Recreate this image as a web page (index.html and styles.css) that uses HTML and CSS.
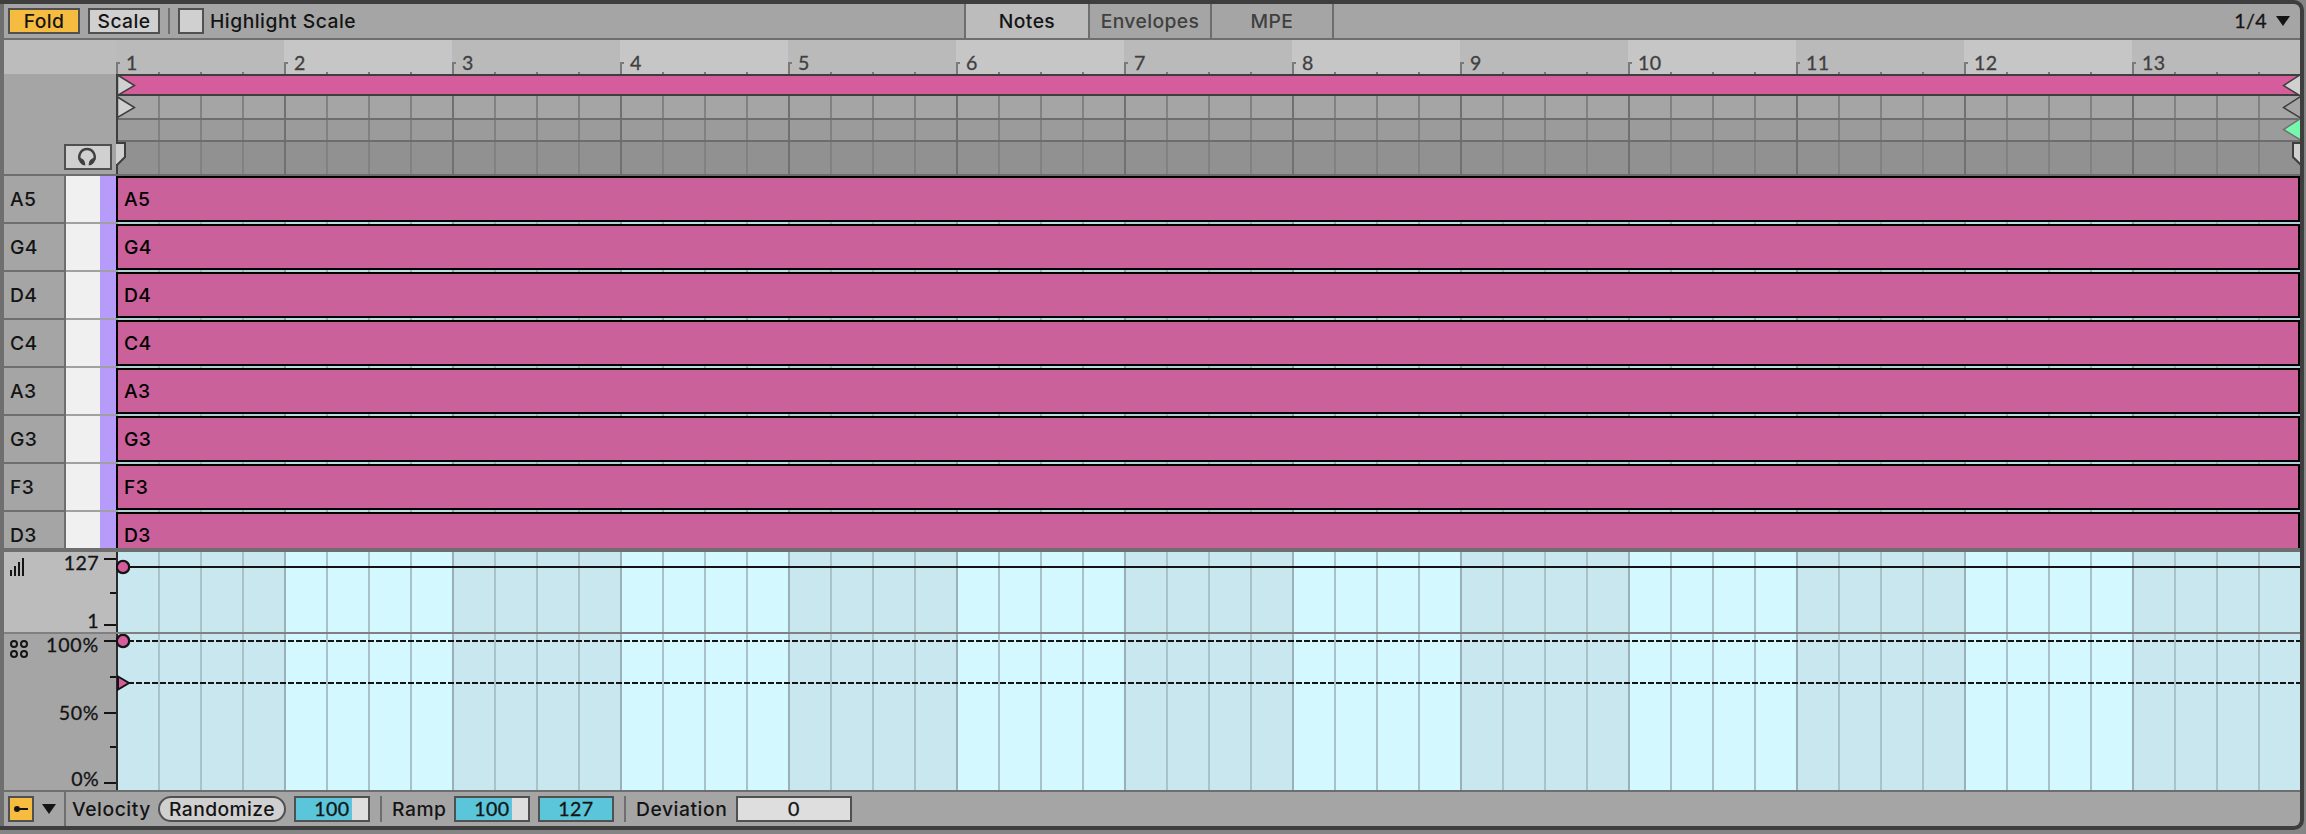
FILE: index.html
```
<!DOCTYPE html>
<html lang="en">
<head>
<meta charset="utf-8">
<title>Clip View</title>
<link rel="stylesheet" href="styles.css">
</head>
<body>
<div class="window">
  <header class="toolbar">
    <div class="tools">
      <button class="btn on fold">Fold</button>
      <button class="btn scale">Scale</button>
      <i class="divider"></i>
      <i class="checkbox"></i>
      <span class="highlight">Highlight Scale</span>
    </div>
    <nav class="tabs">
      <span class="tab active">Notes</span><span class="tab">Envelopes</span><span class="tab">MPE</span>
    </nav>
    <div class="grid-size"><span class="digits">1/4</span><svg width="14" height="10"><path d="M0 0H14L7 10Z" fill="#141414"/></svg></div>
  </header>

  <section class="ruler">
    <div class="gutter"></div>
    <div class="bars" id="bars"></div>
  </section>

  <section class="locators">
    <div class="side">
      <button class="preview"><svg width="20" height="20" viewBox="0 0 20 20"><path d="M3 13A7.700 7.700 0 1 1 17 13" fill="none" stroke="#404040" stroke-width="2.500"/><path d="M1.500 11C5 11 8.300 12.500 8.300 18.500C5 18.500 1.500 15 1.500 11ZM18.500 11C15 11 11.700 12.500 11.700 18.500C15 18.500 18.500 15 18.500 11Z" fill="#404040"/></svg></button>
    </div>
    <div class="tracks">
      <div class="clip-bar"></div>
      <div class="track t1"></div>
      <div class="track t2"></div>
      <div class="track t3"></div>
      <svg class="markers" width="2184" height="102" viewBox="0 0 2184 102">
        <g stroke="#3e3e3e" stroke-width="1.500">
          <path d="M1 0V100" stroke-width="2"/>
          <path d="M1.500 1L18.500 11.500L1.500 21.500Z" fill="#d0d0d0"/>
          <path d="M1.500 23L18.500 33.500L1.500 43.500Z" fill="#d0d0d0"/>
          <path d="M0 69H9V83L1 91H0" fill="#d0d0d0" stroke-width="2"/>
          <path d="M2187 -1L2167.500 11.500L2187 23.500Z" fill="#d0d0d0"/>
          <path d="M2187 21L2167.500 33.500L2187 45.500Z" fill="#a5a5a5"/>
          <path d="M2187 43L2167.500 55.500L2187 67.500Z" fill="#75f8ac" stroke="#707070"/>
          <path d="M2188 69H2177V83L2188 94Z" fill="#d0d0d0" stroke-width="2"/>
        </g>
      </svg>
    </div>
  </section>

  <section class="notes" id="notes"></section>

  <section class="lane velocity">
    <div class="scale-col">
      <svg width="112" height="80" viewBox="0 0 112 80"><path d="M7 18V24M11 14V24M15 10V24M19 6V24" stroke="#141414" stroke-width="2"/><path d="M100 7H112M106 41H112M100 73H112" stroke="#141414" stroke-width="2"/></svg>
      <span class="mark m127">127</span><span class="mark m1">1</span>
    </div>
    <div class="plot"><svg width="2184" height="80"><path d="M1 0V80" stroke="#2b2b2b" stroke-width="2"/><path d="M12 15H2184" stroke="#141414" stroke-width="2"/><circle cx="7" cy="15" r="6.200" fill="#d55d9c" stroke="#141414" stroke-width="2.300"/></svg></div>
  </section>
  <section class="lane chance">
    <div class="scale-col">
      <svg width="112" height="156" viewBox="0 0 112 156"><g fill="none" stroke="#141414" stroke-width="2"><circle cx="10" cy="10" r="3"/><circle cx="20" cy="10" r="3"/><circle cx="10" cy="20" r="3"/><circle cx="20" cy="20" r="3"/><path d="M100 7H112M106 43H112M100 79H112M106 113H112M100 149H112"/></g></svg>
      <span class="mark m100">100%</span><span class="mark m50">50%</span><span class="mark m0">0%</span>
    </div>
    <div class="plot"><svg width="2184" height="156"><path d="M1 0V156" stroke="#2b2b2b" stroke-width="2"/><path d="M12 7H2184M12 49H2184" stroke="#141414" stroke-width="2" stroke-dasharray="6 2"/><circle cx="7" cy="7" r="6.200" fill="#d55d9c" stroke="#141414" stroke-width="2.300"/><path d="M2 42.500L13 49L2 55.500Z" fill="#d55d9c" stroke="#141414" stroke-width="2"/></svg></div>
  </section>

  <footer class="footer">
    <div class="lane-toggle">
      <span class="lane-btn"><svg width="22" height="22" viewBox="0 0 22 22"><circle cx="7" cy="11" r="3" fill="#141414"/><path d="M7 11H18" stroke="#141414" stroke-width="2"/></svg></span>
      <svg width="14" height="10"><path d="M0 0H14L7 10Z" fill="#141414"/></svg>
    </div>
    <span class="label f-velocity">Velocity</span>
    <button class="randomize">Randomize</button>
    <span class="num">100</span>
    <i class="divider wide"></i>
    <span class="label f-ramp">Ramp</span>
    <span class="num">100</span>
    <span class="num full">127</span>
    <i class="divider wide"></i>
    <span class="label f-dev">Deviation</span>
    <span class="num dev">0</span>
  </footer>
</div>
<script src="app.js"></script>
</body>
</html>
```
FILE: styles.css
```
* { box-sizing: border-box; }
body { margin: 0; width: 2306px; height: 834px; overflow: hidden; background: #858585; font: 500 19.300px/24px Inter, "Liberation Sans", sans-serif; letter-spacing: .4px; color: #141414; }
button { font: inherit; color: inherit; padding: 0; letter-spacing: inherit; }
svg { display: block; flex: none; }
.digits, .mark, .num, .bar span { font-family: Lato, Inter, sans-serif; font-size: 19.600px; font-weight: 400; letter-spacing: .4px; -webkit-text-stroke: .3px currentColor; }
.window { width: 2304px; height: 830px; border: 4px solid #3e3e3e; border-left-width: 0; border-radius: 0 10px 10px 0; overflow: hidden; background: #a5a5a5; display: flex; flex-direction: column; padding-left: 4px; box-shadow: inset 4px 0 #6e6e6e; }
.toolbar { height: 36px; border-bottom: 2px solid #6e6e6e; display: flex; flex: none; }
.tools { display: flex; align-items: center; width: 960px; padding-left: 4px; }
.btn { height: 26px; width: 72px; border: 2px solid #505050; background: #d0d0d0; line-height: 22px; }
.btn.on { background: #f6bc40; }
.scale { margin-left: 8px; }
.divider { width: 2px; height: 26px; background: #6e6e6e; margin: 0 8px; flex: none; }
.divider.wide { margin: 0 10px; }
.checkbox { width: 26px; height: 26px; border: 2px solid #505050; background: #d0d0d0; margin-right: 6px; }
.highlight { letter-spacing: .5px; }
.tabs { display: flex; border-left: 2px solid #6e6e6e; }
.tab { border-right: 2px solid #6e6e6e; width: 122px; height: 34px; text-align: center; line-height: 34px; color: #404040; }
.tab.active { background: #bcbcbc; color: #141414; width: 124px; }
.grid-size { width: 966px; display: flex; justify-content: flex-end; align-items: center; padding-right: 10px; gap: 9px; }
.ruler { height: 34px; display: flex; flex: none; background: #bcbcbc; }
.gutter { width: 112px; flex: none; }
.bars { display: flex; width: 2184px; overflow: hidden; }
.bar { width: 168px; flex: none; background: #bababa; color: #404040; display: grid; grid-template-columns: repeat(4, 42px); align-items: end; }
.bar:nth-child(even) { background: #c6c6c6; }
.bar i { width: 2px; height: 2px; background: #7a7a7a; }
.bar span { height: 34px; padding: 11px 0 0 10px; line-height: 23px; background: linear-gradient(#7a7a7a, #7a7a7a) 0 100%/2px 12px no-repeat, linear-gradient(#7a7a7a, #7a7a7a) 0 22px/4px 2px no-repeat; }
.locators { height: 102px; display: flex; flex: none; }
.side { width: 112px; border-bottom: 2px solid #6e6e6e; padding: 70px 0 0 60px; flex: none; }
.preview { width: 48px; height: 26px; border: 2px solid #505050; background: #d0d0d0; display: flex; align-items: center; justify-content: center; padding-right: 2px; }
.tracks { width: 2184px; position: relative; }
.markers { position: absolute; left: 0; top: 0; }
.clip-bar { height: 22px; background: #d55d9c; border: solid #3e3e3e; border-width: 2px 0; }
.track { border-bottom: 2px solid #6d6d6d; background-image: linear-gradient(90deg, #707070 2px, transparent 2px), linear-gradient(90deg, #818181 2px, transparent 2px); background-size: 168px 100%, 42px 100%; }
.t1 { height: 24px; background-color: #a5a5a5; }
.t2 { height: 22px; background-color: #9b9b9b; }
.t3 { height: 34px; background-color: #919191; }
.notes { height: 376px; border-bottom: 4px solid #6e6e6e; overflow: hidden; flex: none; }
.row { height: 48px; display: flex; }
.key-name { width: 60px; border-bottom: 2px solid #6e6e6e; line-height: 46px; padding-left: 6px; flex: none; }
.key { width: 52px; flex: none; border-left: 2px solid #6e6e6e; background: linear-gradient(#a0a0a0, #a0a0a0) 0 100%/100% 2px no-repeat, linear-gradient(90deg, #f0f0f0 34px, #b79bf8 34px); }
.note-cell { width: 2184px; padding-bottom: 2px; }
.note { height: 46px; background: #cb619b; border: 2px solid #000; line-height: 42px; padding-left: 6px; color: #000; }
.plot { width: 2184px; background-image: linear-gradient(90deg, #9bb0b6 2px, transparent 2px), linear-gradient(90deg, #a9c2c8 2px, transparent 2px), linear-gradient(90deg, #c9e7ee 168px, #d4f8ff 168px); background-size: 168px 100%, 42px 100%, 336px 100%; }
.note-cell { background-image: linear-gradient(90deg, #8da3a8 2px, transparent 2px), linear-gradient(90deg, #9bb2b8 2px, transparent 2px), linear-gradient(90deg, #b2d0d8 168px, #bce0e5 168px); background-size: 168px 100%, 42px 100%, 336px 100%; }
.lane { display: flex; flex: none; }
.velocity { height: 82px; border-bottom: 2px solid #808080; }
.chance { height: 158px; border-bottom: 2px solid #6e6e6e; }
.scale-col { width: 112px; flex: none; position: relative; }
.velocity .scale-col { background: #bcbcbc; }
.mark { position: absolute; right: 17px; line-height: 24px; }
.m127 { top: -1px; }
.m1 { top: 57px; }
.m100 { top: -1px; letter-spacing: .8px; }
.m50 { top: 67px; letter-spacing: .6px; }
.m0 { top: 133px; }
.footer { height: 34px; display: flex; align-items: center; flex: none; }
.lane-toggle { width: 62px; height: 34px; border-right: 2px solid #6e6e6e; display: flex; align-items: center; padding-left: 4px; gap: 8px; margin-right: 6px; }
.lane-btn { width: 26px; height: 26px; border: 2px solid #505050; background: #f6bc40; }
.label { letter-spacing: .55px; }
.f-velocity { width: 86px; }
.randomize { width: 128px; height: 26px; border: 2px solid #505050; border-radius: 13px; background: #d0d0d0; line-height: 22px; margin-right: 8px; }
.num { height: 26px; width: 76px; border: 2px solid #505050; background: linear-gradient(90deg, #5bc5da 56px, #dedede 56px); line-height: 22px; text-align: center; }
.f-ramp { width: 62px; }
.num.full { margin-left: 8px; background: #5bc5da; }
.f-dev { width: 100px; }
.num.dev { width: 116px; background: #dedede; }
```
FILE: app.js
```
const bars = document.getElementById('bars');
for (let n = 1; n <= 13; n++) {
  bars.insertAdjacentHTML('beforeend', `<div class="bar"><span>${n}</span><i></i><i></i><i></i></div>`);
}
const notes = document.getElementById('notes');
for (const name of ['A5', 'G4', 'D4', 'C4', 'A3', 'G3', 'F3', 'D3']) {
  notes.insertAdjacentHTML('beforeend', `<div class="row"><div class="key-name">${name}</div><div class="key"></div><div class="note-cell"><div class="note">${name}</div></div></div>`);
}
```
